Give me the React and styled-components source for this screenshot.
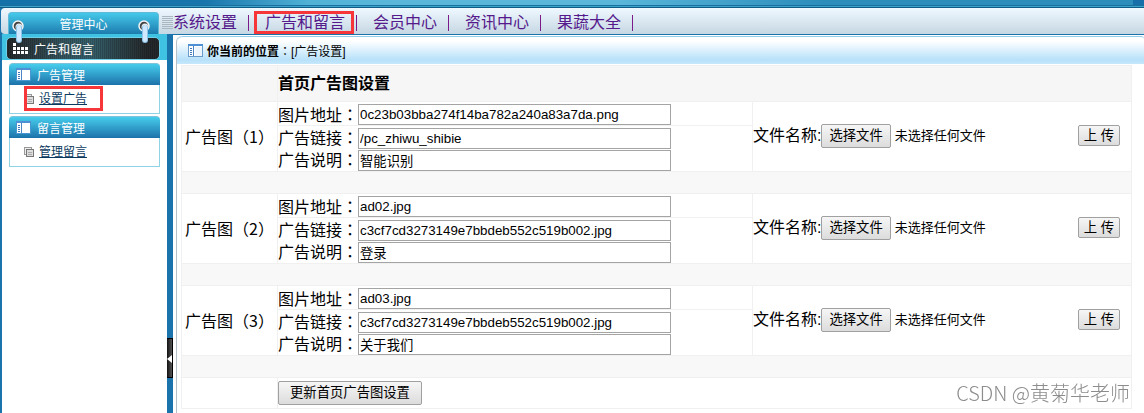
import { useRef, useState } from "react";
import styled, { createGlobalStyle } from "styled-components";

const GlobalStyle = createGlobalStyle`
  *,
  *::before,
  *::after {
    box-sizing: border-box;
  }

  body {
    margin: 0;
    background: #1a74ab;
    color: #000;
    font-family: "Liberation Sans", "Noto Sans CJK SC", sans-serif;
    font-size: 16px;
  }
`;

const Page = styled.div`
  min-height: 100vh;
  display: flex;
  flex-direction: column;
`;

const TopStrip = styled.div`
  height: 8px;
  background:
    linear-gradient(to bottom, transparent 5px, #17709f 5px, #17709f 6px, #3fa3c8 6px, #3fa3c8 7px, #0e5c88 7px),
    linear-gradient(to right, #1572a9 0%, #1976ac 18%, #51b2d6 27%, #5ab7da 34%, #5ab7da 54%, #2d8dbb 72%, #2d8dbb 99%, #166fa8 99%);
`;

const NavBar = styled.header`
  height: 26px;
  margin-left: 1px;
  padding-left: 7px;
  display: flex;
  align-items: flex-end;
  border-radius: 4px 0 0 4px;
  background: linear-gradient(to bottom, #eff8ff, #c6d7e3);
`;

const CenterTab = styled.div`
  position: relative;
  width: 151px;
  height: 22px;
  border: 1px solid #5fb9d8;
  border-bottom: 0;
  border-radius: 4px 4px 0 0;
  background: linear-gradient(to bottom, #45c9ea, #1d7bae);
  color: #fff;
  font-size: 12px;
  line-height: 24px;
  text-align: center;
`;

const Ring = styled.svg`
  position: absolute;
  z-index: 1;
  top: 7px;
  ${(props) => (props.$side === "left" ? "left: 3px;" : "right: 7px;")}
`;

const Nav = styled.nav`
  height: 26px;
  padding-top: 3px;
  margin-left: 3px;
  display: flex;
  align-items: center;
`;

const Grip = styled.span`
  width: 11px;
  height: 13px;
  background: repeating-linear-gradient(to bottom, #aab6c0 0, #aab6c0 1px, transparent 1px, transparent 2px);
`;

const NavItem = styled.span`
  position: relative;
  display: flex;
  align-items: center;
  line-height: 23px;
  margin-right: 16px;

  &::before {
    content: "";
    display: ${(props) => (props.$marked ? "block" : "none")};
    position: absolute;
    top: 0;
    left: -11px;
    width: 100px;
    height: 23px;
    border: 3px solid #f7363a;
    pointer-events: none;
  }

  &::after {
    content: "";
    width: 1px;
    height: 16px;
    margin-left: 11px;
    background: #7a1a8b;
  }
`;

const NavLink = styled.a`
  color: #551a8b;
  text-decoration: none;
`;

const Body = styled.div`
  flex: 1;
  display: flex;
`;

const Sidebar = styled.aside`
  width: 165px;
  margin-left: 2px;
  background: #fff;
`;

const SectionWrap = styled.div`
  height: 26px;
  padding: 3px 7px 0 4px;
  margin-bottom: 3px;
  background: #40c2e2;
`;

const SectionTitle = styled.h2`
  height: 23px;
  margin: 0;
  padding-left: 6px;
  display: flex;
  align-items: center;
  gap: 6px;
  border: 1px solid #6fd0e8;
  border-radius: 5px;
  background:
    repeating-linear-gradient(to right, transparent 0, transparent 1px, rgba(0, 0, 0, 0.16) 1px, rgba(0, 0, 0, 0.16) 2px),
    linear-gradient(to right, #24292b, #36545d 35%, #36606b 55%, #25292b 92%);
  color: #fff;
  font-size: 12px;
  font-weight: normal;
`;

const Menu = styled.section`
  margin: 0 7px 2px;
`;

const MenuTitle = styled.h3`
  height: 22px;
  margin: 0;
  padding-left: 7px;
  display: flex;
  align-items: center;
  gap: 6px;
  border-top: 1px solid #7fc3d8;
  border-radius: 4px 4px 0 0;
  background: linear-gradient(to bottom, #47cdec, #1c72aa);
  color: #fff;
  font-size: 12px;
  font-weight: normal;
`;

const MenuBody = styled.div`
  height: 29px;
  padding: 0 0 1px 14px;
  display: flex;
  align-items: center;
  border: 1px solid #90d3e4;
  border-top: 0;
`;

const MenuEntry = styled.div`
  position: relative;
  display: flex;
  align-items: center;
  gap: 5px;

  &::after {
    content: "";
    display: ${(props) => (props.$marked ? "block" : "none")};
    position: absolute;
    top: -4px;
    left: 0;
    width: 79px;
    height: 25px;
    border: 3px solid #f7363a;
    pointer-events: none;
  }
`;

const MenuLink = styled.a`
  color: #0b3a60;
  font-size: 12px;
  line-height: 18px;
  text-decoration: underline;
`;

const Divider = styled.div`
  width: 6px;
  padding-top: 304px;
`;

const CollapseButton = styled.button`
  display: block;
  width: 6px;
  height: 40px;
  padding: 0;
  border: 1px solid #000;
  border-left: 0;
  background: linear-gradient(to right, #111, #555);
`;

const Main = styled.main`
  flex: 1;
  min-width: 0;
  margin-top: 1px;
  padding-left: 3px;
  background: #fff;
`;

const Panel = styled.div`
  min-height: 100%;
  margin-top: 1px;
  border-left: 1px solid #b5c0c8;
  border-top-left-radius: 6px;
`;

const Location = styled.div`
  height: 28px;
  padding-left: 11px;
  display: flex;
  align-items: center;
  border-top: 1px solid #93cce8;
  border-radius: 6px 3px 0 0;
  background: linear-gradient(to bottom, #fff 15%, #b7e1fa 85%, #c6e8fc);
  font-size: 12px;

  svg {
    margin-right: 4px;
  }
`;

const Table = styled.table`
  width: calc(100% - 16px);
  margin: 1px 12px 0 4px;
  border-collapse: collapse;
  table-layout: fixed;
`;

const Cell = styled.td`
  height: ${(props) => props.$height || 70}px;
  padding: 0;
  border: 1px solid #f0f0f0;
  background: ${(props) => props.$background || "#fff"};
  line-height: 20px;
  white-space: nowrap;
`;

const NameCell = styled(Cell)`
  padding-left: 3px;
`;

const HeadCell = styled(Cell)`
  font-weight: bold;
  text-align: left;
`;

const FieldRow = styled.div`
  height: ${(props) => (props.$first ? 24 : 22)}px;
  padding-top: ${(props) => (props.$first ? 2 : 0)}px;
  margin-bottom: ${(props) => (props.$first ? 1 : 0)}px;
  display: flex;
  align-items: center;
  border-bottom: ${(props) => (props.$first ? "1px solid #f0f0f0" : "0")};
`;

// full-width punctuation centred in its box
const Punct = styled.span`
  font-family: "Noto Sans CJK TC", sans-serif;
`;

const TextInput = styled.input`
  width: 313px;
  height: 21px;
  padding: 1px;
  border: 1px solid #a4a4a4;
  border-radius: 0;
  background: #fff;
  color: #000;
  font-family: inherit;
`;

const Button = styled.button`
  height: ${(props) => props.$height || 24}px;
  padding: 0 ${(props) => props.$pad || 11}px;
  border: 1px solid #a0a0a0;
  border-radius: 2px;
  background: linear-gradient(to bottom, #f6f6f6, #dcdcdc);
  color: #000;
  font-family: inherit;
  line-height: 18px;
`;

const UploadRow = styled.form`
  padding: 0 11px 2px 0;
  display: flex;
  align-items: center;
  justify-content: space-between;
`;

const FileField = styled.div`
  display: flex;
  align-items: center;
`;

const FileInput = styled.input`
  display: none;
`;

const FileStatus = styled.span`
  margin-left: 4px;
  font-size: 13px;
`;

const Watermark = styled.div`
  position: fixed;
  right: 14px;
  bottom: 6px;
  color: #8c8c8c;
  font-size: 20px;
  line-height: 28px;
  font-weight: 300;
  font-family: "Noto Sans CJK SC", sans-serif;
  text-shadow: 1px 1px 0 #fff;
  pointer-events: none;
`;

const navItems = ["系统设置", "广告和留言", "会员中心", "资讯中心", "果蔬大全"];

const menus = [
  { title: "广告管理", link: "设置广告", marked: true },
  { title: "留言管理", link: "管理留言", marked: false },
];

const initialAds = [
  { image: "0c23b03bba274f14ba782a240a83a7da.png", link: "/pc_zhiwu_shibie", note: "智能识别" },
  { image: "ad02.jpg", link: "c3cf7cd3273149e7bbdeb552c519b002.jpg", note: "登录" },
  { image: "ad03.jpg", link: "c3cf7cd3273149e7bbdeb552c519b002.jpg", note: "关于我们" },
];

const fields = [
  { key: "image", label: "图片地址" },
  { key: "link", label: "广告链接" },
  { key: "note", label: "广告说明" },
];

const HangingRing = ({ side }) => (
  <Ring $side={side} width="13" height="24" viewBox="0 0 13 24" aria-hidden="true">
    <circle cx="6" cy="6" r="5" fill="#444" stroke="#f4f6f7" strokeWidth="1.5" />
    <circle cx="7" cy="7" r="3.5" fill="#e4eaee" />
    <rect x="4" y="5" width="6" height="18" rx="3" fill="#8fc4ea" />
    <rect x="5" y="5" width="4" height="17" rx="2" fill="#cfe8ff" />
  </Ring>
);

const WindowIcon = ({ light }) => (
  <svg width="15" height="13" viewBox="0 0 15 13" aria-hidden="true">
    <rect x="0.5" y="0.5" width="14" height="12" fill="#fff" stroke={light ? "#4a96d0" : "#6a9bcb"} />
    <rect x="0" y="0" width="15" height="2" fill="#4f8fd4" />
    <rect x="5" y="2" width="1" height="10" fill="#4a86c4" />
    <path d="M2 4.5h2M2 6.5h2M2 8.5h2M2 10.5h2" stroke="#3f78b8" />
    <rect x="7" y="3" width="7" height="9" fill={light ? "#fff" : "#edf5fc"} />
  </svg>
);

const PagesIcon = () => (
  <svg width="10" height="10" viewBox="0 0 10 10" aria-hidden="true">
    <rect x="0.5" y="0.5" width="7" height="7" fill="#eee" stroke="#999" />
    <rect x="2.5" y="2.5" width="7" height="7" fill="#ddd" stroke="#777" />
    <path d="M4 5.5h4M4 7.5h4" stroke="#aaa" />
  </svg>
);

const DotsIcon = () => (
  <svg width="15" height="11" viewBox="0 0 15 11" fill="#fff" aria-hidden="true">
    {[0, 4, 8].map((y) =>
      [0, 4, 8, 12].map((x) => (y === 0 && x > 0 ? null : <rect key={`${x}-${y}`} x={x} y={y} width="3" height="3" />))
    )}
  </svg>
);

const AdRow = ({ index, ad, onChange }) => {
  const [fileName, setFileName] = useState("");
  const fileRef = useRef(null);

  return (
    <>
      <tr>
        <NameCell>
          广告图<Punct>（{index + 1}）</Punct>
        </NameCell>
        <Cell>
          {fields.map(({ key, label }, i) => (
            <FieldRow key={key} $first={i === 0}>
              <label htmlFor={`${key}-${index}`}>
                {label}
                <Punct>：</Punct>
              </label>
              <TextInput
                id={`${key}-${index}`}
                type="text"
                value={ad[key]}
                onChange={(e) => onChange(index, key, e.target.value)}
              />
            </FieldRow>
          ))}
        </Cell>
        <Cell>
          <UploadRow onSubmit={(e) => e.preventDefault()}>
            <FileField>
              <label htmlFor={`file-${index}`}>文件名称:</label>
              <FileInput
                id={`file-${index}`}
                ref={fileRef}
                type="file"
                onChange={(e) => setFileName(e.target.files[0]?.name || "")}
              />
              <Button type="button" $pad={7} onClick={() => fileRef.current.click()}>
                选择文件
              </Button>
              <FileStatus>{fileName || "未选择任何文件"}</FileStatus>
            </FileField>
            <Button type="submit" $height={21} $pad={5}>
              上 传
            </Button>
          </UploadRow>
        </Cell>
      </tr>
      <tr>
        <Cell colSpan={3} $height={22} $background="#f8f8f8" />
      </tr>
    </>
  );
};

const App = () => {
  const [ads, setAds] = useState(initialAds);

  const handleChange = (index, key, value) => {
    setAds(ads.map((ad, i) => (i === index ? { ...ad, [key]: value } : ad)));
  };

  return (
    <Page>
      <GlobalStyle />
      <TopStrip />
      <NavBar>
        <CenterTab>
          <HangingRing side="left" />
          管理中心
          <HangingRing side="right" />
        </CenterTab>
        <Nav>
          <Grip />
          {navItems.map((item) => (
            <NavItem key={item} $marked={item === "广告和留言"}>
              <NavLink href="#">{item}</NavLink>
            </NavItem>
          ))}
        </Nav>
      </NavBar>

      <Body>
        <Sidebar>
          <SectionWrap>
            <SectionTitle>
              <DotsIcon />
              广告和留言
            </SectionTitle>
          </SectionWrap>
          {menus.map((menu) => (
            <Menu key={menu.title}>
              <MenuTitle>
                <WindowIcon light />
                {menu.title}
              </MenuTitle>
              <MenuBody>
                <MenuEntry $marked={menu.marked}>
                  <PagesIcon />
                  <MenuLink href="#">{menu.link}</MenuLink>
                </MenuEntry>
              </MenuBody>
            </Menu>
          ))}
        </Sidebar>

        <Divider>
          <CollapseButton type="button" aria-label="收起">
            <svg width="5" height="8" viewBox="0 0 5 8" aria-hidden="true">
              <path d="M5 0v8L0 4z" fill="#fff" />
            </svg>
          </CollapseButton>
        </Divider>

        <Main>
          <Panel>
            <Location>
              <WindowIcon />
              <b>你当前的位置</b>
              <Punct>：</Punct>[广告设置]
            </Location>
            <Table>
              <colgroup>
                <col width="96" />
                <col width="475" />
                <col />
              </colgroup>
              <thead>
                <tr>
                  <Cell $height={36} $background="#f6f6f6" />
                  <HeadCell as="th" colSpan={2} $height={36} $background="#f6f6f6">
                    首页广告图设置
                  </HeadCell>
                </tr>
              </thead>
              <tbody>
                {ads.map((ad, index) => (
                  <AdRow key={index} index={index} ad={ad} onChange={handleChange} />
                ))}
                <tr>
                  <Cell $height={31} />
                  <Cell colSpan={2} $height={31}>
                    <Button type="button">更新首页广告图设置</Button>
                  </Cell>
                </tr>
              </tbody>
            </Table>
          </Panel>
        </Main>
      </Body>
      <Watermark>CSDN @黄菊华老师</Watermark>
    </Page>
  );
};

export default App;
